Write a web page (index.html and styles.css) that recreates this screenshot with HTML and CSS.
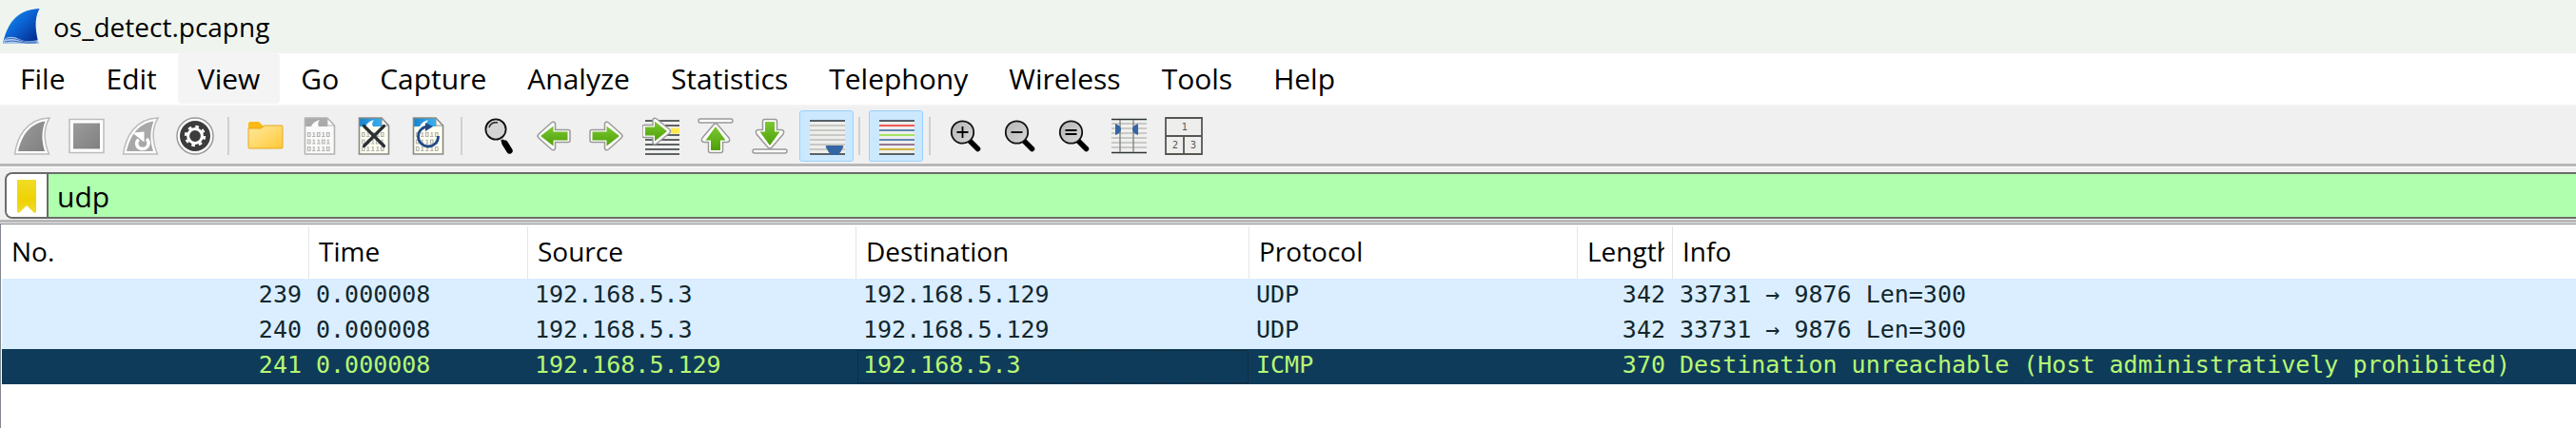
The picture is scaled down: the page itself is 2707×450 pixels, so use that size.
FILE: index.html
```
<!DOCTYPE html>
<html lang="en">
<head>
<meta charset="utf-8">
<title>os_detect.pcapng</title>
<link rel="stylesheet" href="styles.css">
</head>
<body>
<svg class="defs" aria-hidden="true">
  <defs>
    <linearGradient id="blue" x1="0" y1="0" x2="1" y2="1"><stop offset="0" stop-color="#1a9af5"/><stop offset=".5" stop-color="#0a5fd0"/><stop offset="1" stop-color="#04207e"/></linearGradient>
    <linearGradient id="grey" x1="0" y1="0" x2="1" y2="1"><stop offset="0" stop-color="#9c9c9c"/><stop offset="1" stop-color="#808080"/></linearGradient>
    <linearGradient id="green" x1="0" y1="0" x2="0" y2="1"><stop offset="0" stop-color="#7cc832"/><stop offset="1" stop-color="#4ea008"/></linearGradient>
    <linearGradient id="gold" x1="0" y1="0" x2="1" y2="1"><stop offset="0" stop-color="#ffe9a0"/><stop offset="1" stop-color="#ffc936"/></linearGradient>
    <linearGradient id="yellow" x1="0" y1="0" x2="0" y2="1"><stop offset="0" stop-color="#f0dc28"/><stop offset=".6" stop-color="#eed202"/><stop offset="1" stop-color="#f0dc30"/></linearGradient>
    <linearGradient id="sky" x1="0" y1="0" x2="1" y2="0"><stop offset="0" stop-color="#1583cf"/><stop offset="1" stop-color="#3bb0ee"/></linearGradient>
    <linearGradient id="lens" x1="0" y1="0" x2="1" y2="1"><stop offset="0" stop-color="#b4b4b4"/><stop offset="1" stop-color="#d8d8d8"/></linearGradient>
    <g id="digits" fill="none" stroke="#b4b4b0" stroke-width="1.2">
      <path d="M7.500 16.500h2.500v4H7.500zM14 16v5M12 20.500h3.500M12.500 17H14M17.500 16.500H20v4h-2.500zM24 16v5M22 20.500h3.500M22.500 17H24M27.500 16.500H30v4h-2.500z"/>
      <path d="M7.500 24H10v4H7.500zM14 23.500v5M12 28h3.500M12.500 24.500H14M19 23.500v5M17 28h3.500M17.500 24.500H19M22.500 24H25v4h-2.500zM29 23.500v5M27 28h3.500M27.500 24.500H29"/>
      <path d="M7.500 31.500H10v4H7.500zM14 31v5M12 35.500h3.500M12.500 32H14M19 31v5M17 35.500h3.500M17.500 32H19M24 31v5M22 35.500h3.500M22.500 32H24M27.500 31.500H30v4h-2.500z"/>
    </g>
    <g id="arrow-right">
      <path d="M4 13.500h13.500V7q1-3 4-1l13.500 12q2 2 0 4L21.500 34q-3 2-4-1v-6.500H4q-2 0-2-2v-9q0-2 2-2z" fill="#fff" stroke="#999" stroke-width="1.500"/>
      <path d="M4.500 15.500h15V9.500l13.500 10.500-13.500 10.500v-6h-15z" fill="url(#green)"/>
    </g>
    <g id="glass">
      <path d="M23.500 25.500l8 8" stroke="#000" stroke-width="5.500" stroke-linecap="round"/>
      <circle cx="15.500" cy="16" r="11.700" fill="url(#lens)" stroke="#111" stroke-width="1.800"/>
    </g>
  </defs>
</svg>

<header class="titlebar">
  <svg class="app-icon" viewBox="0 0 40 40" aria-hidden="true">
    <path d="M1 38C5 20 13 2 39.500 1 33 13 36 26 38.500 38z" fill="url(#blue)"/>
    <path d="M1 38q1-4 3-6 7-3 14 1t20 1l.5 4z" fill="#a9c6ea"/>
    <path d="M4 33q7-2 14 1t19 2M3 36q8-2 15 0t18 1" fill="none" stroke="#3f6fc0"/>
  </svg>
  <h1 class="title">os_detect.pcapng</h1>
</header>

<nav class="menubar">
  <button class="menu">File</button>
  <button class="menu">Edit</button>
  <button class="menu menu-hot">View</button>
  <button class="menu">Go</button>
  <button class="menu">Capture</button>
  <button class="menu">Analyze</button>
  <button class="menu">Statistics</button>
  <button class="menu">Telephony</button>
  <button class="menu">Wireless</button>
  <button class="menu">Tools</button>
  <button class="menu">Help</button>
</nav>

<div class="toolbar" role="toolbar" aria-label="Main">
  <button class="tool" aria-label="Start capture"><svg viewBox="0 0 40 40">
    <path d="M1.500 39C4 22 13 2 38 1 31 13 32 26 37.500 39z" fill="#fff" stroke="#bbb" stroke-width="1.500"/>
    <path d="M5 36C8 23 15 7 33.500 4.500 29 16 30 26 33 36z" fill="url(#grey)"/></svg></button>
  <button class="tool" aria-label="Stop capture"><svg viewBox="0 0 40 40">
    <path d="M2 2.500h36v35h-36z" fill="#fff" stroke="#bbb" stroke-width="1.500"/><path d="M6 6.500h28v27H6z" fill="url(#grey)"/></svg></button>
  <button class="tool" aria-label="Restart capture"><svg viewBox="0 0 40 40">
    <path d="M1.500 39C4 22 13 2 38 1 31 13 32 26 37.500 39z" fill="#fff" stroke="#bbb" stroke-width="1.500"/>
    <path d="M5 36C8 23 15 7 33.500 4.500 29 16 30 26 33 36z" fill="#a8a8a8"/>
    <path d="M17.500 23.500c-4 5-1 10 4.500 10 6 0 8-7 4-10.500" fill="none" stroke="#fff" stroke-width="3.400"/><path d="M11 16.500l12.500-1v11z" fill="#fff"/></svg></button>
  <button class="tool" aria-label="Capture options"><svg viewBox="0 0 40 40">
    <circle cx="20" cy="20" r="19" fill="#fff" stroke="#999" stroke-width="1.500"/><circle cx="20" cy="20" r="16" fill="#3c3c3c"/>
    <circle cx="20" cy="20" r="7.400" fill="none" stroke="#fff" stroke-width="3"/>
    <circle cx="20" cy="20" r="9.800" fill="none" stroke="#fff" stroke-width="2.800" stroke-dasharray="3.600 4.097"/></svg></button>
  <span class="sep"></span>
  <button class="tool" aria-label="Open file"><svg viewBox="0 0 40 40">
    <path d="M2 12V7q0-2 2-2h9l4 4h4v4z" fill="#fbb914"/><path d="M2 12h13l4-3h18q1 0 1 1v22q0 1-1 1H3q-1 0-1-1z" fill="url(#gold)" stroke="#e8a81c"/></svg></button>
  <button class="tool" aria-label="Save file"><svg viewBox="0 0 40 40">
    <path d="M4 1h24l8 8v30H4z" fill="#fafafa"/><path d="M4 1h24v9H4z" fill="#aaa"/><path d="M11 10q2-5 9-7-3 4-1 7z" fill="#fff"/>
    <use href="#digits"/><path d="M28 1v8h8" fill="#fff" stroke="#b4b4b4"/><path d="M4.500 1h23.500l7.500 8v30h-31z" fill="none" stroke="#b4b4b4" stroke-width="1.600"/></svg></button>
  <button class="tool" aria-label="Close file"><svg viewBox="0 0 40 40">
    <path d="M4 1h24l8 8v30H4z" fill="#fffff0"/><path d="M4 1h24v9H4z" fill="url(#sky)"/><path d="M11 10q2-5 9-7-3 4-1 7z" fill="#fff"/>
    <use href="#digits"/><path d="M28 1v8h8" fill="#fff" stroke="#888a85"/><path d="M4.500 1h23.500l7.500 8v30h-31z" fill="none" stroke="#888a85" stroke-width="1.600"/>
    <path d="M9.500 9.500l21 21M30.500 9.500l-21 21" stroke="#2b2f33" stroke-width="3.200" stroke-linecap="round"/></svg></button>
  <button class="tool" aria-label="Reload file"><svg viewBox="0 0 40 40">
    <path d="M4 1h24l8 8v30H4z" fill="#fffff0"/><path d="M4 1h24v9H4z" fill="url(#sky)"/><path d="M11 10q2-5 9-7-3 4-1 7z" fill="#fff"/>
    <use href="#digits"/><path d="M28 1v8h8" fill="#fff" stroke="#888a85"/><path d="M4.500 1h23.500l7.500 8v30h-31z" fill="none" stroke="#888a85" stroke-width="1.600"/>
    <path d="M30.500 20A10.500 10.500 0 1 1 20 10" fill="none" stroke="#204a87" stroke-width="2.800"/><path d="M17 6l8 4-8 5z" fill="#204a87"/></svg></button>
  <span class="sep"></span>
  <button class="tool" aria-label="Find packet"><svg viewBox="0 0 40 40">
    <path d="M23.500 24l2 4" stroke="#000" stroke-width="3"/><path d="M26.500 27.500l5 8" stroke="#000" stroke-width="6.400" stroke-linecap="round"/>
    <circle cx="17" cy="13" r="10.600" fill="#d3d3d3" stroke="#111" stroke-width="1.800"/><path d="M10 11q2-6 9-5" fill="none" stroke="#222" stroke-width="1.500"/></svg></button>
  <button class="tool" aria-label="Previous packet"><svg viewBox="0 0 40 40"><use href="#arrow-right" transform="matrix(-1 0 0 1 40 0)"/></svg></button>
  <button class="tool" aria-label="Next packet"><svg viewBox="0 0 40 40"><use href="#arrow-right"/></svg></button>
  <button class="tool" aria-label="Go to packet"><svg viewBox="0 0 40 40">
    <path d="M30 11.500h9v6h-9z" fill="#fce94f"/><path d="M3 4h36M3 9h36M3 19h36M3 24h36M3 29h36M3 34h36M3 39h36" stroke="#2e3436" stroke-width="1.700"/>
    <path d="M2 8.500h9V3q1-3 4-1l13.500 11q2 2 0 4L15 28q-3 2-4-1v-5.500H2q-2 0-2-2v-9q0-2 2-2z" fill="#fff" stroke="#999" stroke-width="1.500"/>
    <path d="M3 10.500h10v-6l13 10.500-13 10.500v-6H3z" fill="url(#green)"/></svg></button>
  <button class="tool" aria-label="First packet"><svg viewBox="0 0 40 40">
    <rect x="2" y="2" width="36" height="4" rx="2" fill="#fff" stroke="#999" stroke-width="1.400"/>
    <path d="M18 8q2-2 4 0l12 14q2 4-2 4.500h-4.500v9q0 2-2 2h-11q-2 0-2-2v-9H8q-4-.5-2-4.500z" fill="#fff" stroke="#999" stroke-width="1.500"/>
    <path d="M20 10l10.500 14.500h-5.500V35H15V24.500H9.500z" fill="url(#green)"/></svg></button>
  <button class="tool" aria-label="Last packet"><svg viewBox="0 0 40 40">
    <rect x="2" y="34" width="36" height="4" rx="2" fill="#fff" stroke="#999" stroke-width="1.400"/>
    <path d="M18 32q2 2 4 0l12-14q2-4-2-4.500h-4.500v-9q0-2-2-2h-11q-2 0-2 2v9H8q-4 .5-2 4.500z" fill="#fff" stroke="#999" stroke-width="1.500"/>
    <path d="M20 30l10.500-14.500h-5.500V5H15v10.500H9.500z" fill="url(#green)"/></svg></button>
  <button class="tool tool-on" aria-pressed="true" aria-label="Auto scroll"><svg viewBox="0 0 40 40">
    <path d="M2 5h37v34H2z" fill="#eeeeec"/><path d="M2 9h37M2 14h37M2 19h37M2 24h37M2 29h37M2 34h37" stroke="#babdb6" stroke-width="1.500"/><path d="M2 4h37M2 39h37" stroke="#2e3436" stroke-width="1.700"/>
    <path d="M20 30h16q2 0 1 2-2 5-6 8h-6q-4-3-6-8-1-2 1-2z" fill="#3465a4"/></svg></button>
  <span class="sep sep-tight"></span>
  <button class="tool tool-on" aria-pressed="true" aria-label="Colorize packets"><svg viewBox="0 0 40 40">
    <path d="M2 5h37v34H2z" fill="#eeeeec"/><path d="M2 4h37M2 39h37" stroke="#2e3436" stroke-width="1.700"/>
    <path d="M2 9h37" stroke="#ef2929" stroke-width="1.700"/><path d="M2 14h37M2 24h37" stroke="#3465a4" stroke-width="1.700"/><path d="M2 19h37" stroke="#8ae234" stroke-width="1.700"/><path d="M2 29h37" stroke="#75507b" stroke-width="1.700"/><path d="M2 34h37" stroke="#c4a000" stroke-width="1.700"/></svg></button>
  <span class="sep"></span>
  <button class="tool" aria-label="Zoom in"><svg viewBox="0 0 40 40"><use href="#glass"/><path d="M9.500 16h12M15.500 10v12" stroke="#000" stroke-width="1.800"/></svg></button>
  <button class="tool" aria-label="Zoom out"><svg viewBox="0 0 40 40"><use href="#glass"/><path d="M9.500 16h12" stroke="#000" stroke-width="1.800"/></svg></button>
  <button class="tool" aria-label="Normal size"><svg viewBox="0 0 40 40"><use href="#glass"/><path d="M9.500 14h12M9.500 18h12" stroke="#000" stroke-width="1.800"/></svg></button>
  <button class="tool" aria-label="Resize columns"><svg viewBox="0 0 40 40">
    <path d="M1 7h37M1 12h37M1 17h37M1 22h37M1 27h37M1 32h37" stroke="#babdb6" stroke-width="1.500"/><path d="M1 2.500h37M1 37.500h37" stroke="#2e3436" stroke-width="1.700"/>
    <path d="M10 3v34M24 3v34" stroke="#888a85" stroke-width="1.500"/><path d="M5 7q6 2 6 6t-6 6zM29 7q-6 2-6 6t6 6z" fill="#3465a4"/></svg></button>
  <button class="tool" aria-label="Layout"><svg viewBox="0 0 40 40">
    <path d="M1 1h38v38H1zM1 20h38M20 20v19" fill="#eeeeec" stroke="#555753" stroke-width="1.800"/>
    <text class="pane" x="21" y="14">1</text><text class="pane" x="11" y="33">2</text><text class="pane" x="30" y="33">3</text></svg></button>
</div>

<div class="filterbar">
  <div class="filter">
    <button class="bookmark" aria-label="Filter bookmarks"><svg viewBox="0 0 22 36"><path d="M1 2q0-1 1-1h18q1 0 1 1v33l-2 1-8-8-8 8-2-1z" fill="url(#yellow)"/></svg></button>
    <input class="filter-input" type="text" value="udp" aria-label="Display filter" spellcheck="false">
  </div>
</div>

<main class="packets">
  <table class="packet-list">
    <colgroup><col class="c-no"><col class="c-time"><col class="c-addr"><col class="c-dest"><col class="c-addr"><col class="c-len"><col></colgroup>
    <thead>
      <tr><th>No.</th><th>Time</th><th>Source</th><th>Destination</th><th>Protocol</th><th><div class="clip">Length</div></th><th>Info</th></tr>
    </thead>
    <tbody>
      <tr><td class="num">239</td><td>0.000008</td><td>192.168.5.3</td><td>192.168.5.129</td><td>UDP</td><td class="num">342</td><td>33731 → 9876 Len=300</td></tr>
      <tr><td class="num">240</td><td>0.000008</td><td>192.168.5.3</td><td>192.168.5.129</td><td>UDP</td><td class="num">342</td><td>33731 → 9876 Len=300</td></tr>
      <tr class="selected"><td class="num">241</td><td>0.000008</td><td>192.168.5.129</td><td class="focus">192.168.5.3</td><td>ICMP</td><td class="num">370</td><td>Destination unreachable (Host administratively prohibited)</td></tr>
    </tbody>
  </table>
</main>
</body>
</html>
```

FILE: styles.css
```
* { box-sizing: border-box; }

body {
  margin: 0;
  min-height: 100vh;
  display: flex;
  flex-direction: column;
  background: #f0f0f0;
  color: #000;
  font-family: "Open Sans", "Noto Sans", sans-serif;
  font-size: 28px;
  overflow: hidden;
}

button {
  border: 0;
  padding: 0;
  margin: 0;
  background: none;
  color: inherit;
  font: inherit;
}

.defs { position: absolute; width: 0; height: 0; }

.titlebar {
  display: flex;
  align-items: center;
  gap: 14px;
  height: 56px;
  padding-left: 2px;
  background: #eff5ee;
}
.app-icon { width: 40px; height: 40px; }
.title { margin: 0; font-size: 28px; font-weight: 400; line-height: 40px; }

.menubar {
  display: flex;
  gap: 1px;
  height: 56px;
  background: #fff;
  border-bottom: 2px solid #f4f4f4;
}
.menu { height: 53px; padding: 0 21px; font-size: 30px; line-height: 53px; border-radius: 4px; }
.menu-hot { background: #f4f4f4; }

.toolbar {
  display: flex;
  align-items: center;
  height: 63px;
  padding: 2px 0 0 5px;
  border-bottom: 3px solid #b8b8b8;
}
.tool { display: grid; place-items: center; width: 57px; height: 54px; }
.tool svg { width: 40px; height: 40px; display: block; }
.tool-on { margin-left: 3px; background: #cce8ff; border: 1px solid #99d1ff; border-radius: 3px; }
.sep { width: 2px; height: 40px; margin: 0 9px 0 6px; background: #d0d0d0; }
.sep-tight { margin: 0 6px 0 5px; }
.pane { font-family: "DejaVu Sans", sans-serif; font-size: 10px; fill: #555753; text-anchor: middle; }

.filterbar { padding: 5px 0 1px 5px; border-top: 1px solid #fff; border-bottom: 3px solid #b8b8b8; }
.filter {
  display: flex;
  height: 49px;
  border: 2px solid #6b6b6b;
  border-right: 0;
  border-radius: 8px 0 0 8px;
  background: #afffaf;
  overflow: hidden;
}
.bookmark { display: grid; place-items: center; width: 44px; background: #fff; border-right: 2px solid #6b6b6b; }
.bookmark svg { width: 22px; height: 36px; }
.filter-input {
  flex: 1;
  min-width: 0;
  border: 0;
  outline: 0;
  padding: 2px 0 0 9px;
  background: transparent;
  color: #000;
  font: inherit;
  font-size: 30px;
}

.packets {
  flex: 1;
  margin-top: 1px;
  padding: 2px 0 0 1px;
  background: #fff;
  border-top: 1px solid #828790;
  border-left: 1px solid #828790;
}

.packet-list { width: 100%; table-layout: fixed; border-collapse: separate; border-spacing: 0; }
.c-no { width: 323px; }
.c-time { width: 230px; }
.c-addr { width: 345px; }
.c-dest { width: 413px; }
.c-len { width: 100px; }

th {
  height: 55px;
  padding: 0 8px 3px 10px;
  border-right: 1px solid #e5e5e5;
  font-weight: 400;
  text-align: left;
  line-height: 38px;
}
th:last-child { border-right: 0; }
.clip { overflow: hidden; }

td {
  height: 37px;
  padding: 0 8px 0 7px;
  vertical-align: top;
  font-family: "DejaVu Sans Mono", "Liberation Mono", monospace;
  font-size: 25px;
  line-height: 33px;
  white-space: nowrap;
  background: #daeeff;
  color: #12272e;
}
.num { text-align: right; }
.selected td { background: #0f3b5a; color: #b7f774; }
.selected .focus { outline: 1px dotted #10202a; outline-offset: -2px; }
```
